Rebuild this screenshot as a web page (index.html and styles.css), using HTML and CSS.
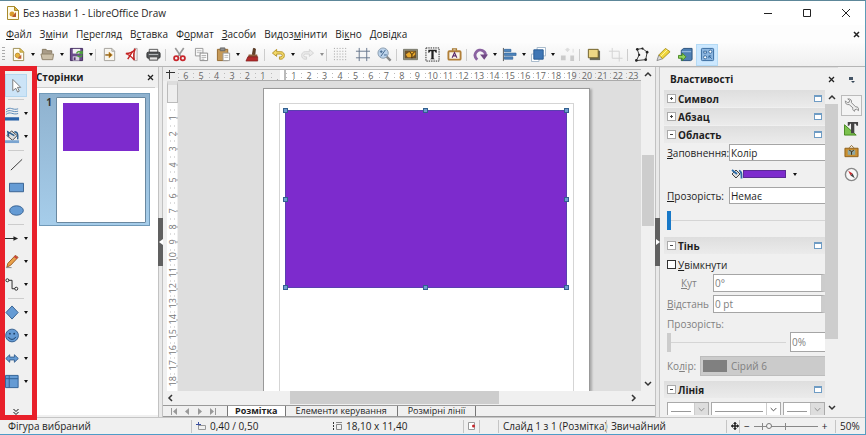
FILE: index.html
```
<!DOCTYPE html>
<html lang="uk">
  <head>
    <meta charset="utf-8">
    <meta name="viewport" content="width=device-width">
    <title>Без назви 1 - LibreOffice Draw</title>
    <link rel="stylesheet" href="styles.css">
  </head>

<body>
    <!-- Title bar -->
    <header class="titlebar">
      <svg class="logo" width="12" height="14" viewBox="0 0 12 14"><path d="M.5.5h7l4 4v9H.5z" fill="#fffbe8" stroke="#a88a2c"/><path d="M7.500.5v4h4z" fill="#e0b840" stroke="#a88a2c"/><circle cx="5" cy="8" r="2.500" fill="#d99a2b"/><path d="M5 11l4-5v5z" fill="#b5562c"/></svg>
      <h1>Без назви 1 - LibreOffice Draw</h1>
      <button class="win" aria-label="Згорнути"><svg width="10" height="10" viewBox="0 0 10 10"><path d="M1 5.500h8" stroke="#222"/></svg></button>
      <button class="win" aria-label="Розгорнути"><svg width="10" height="10" viewBox="0 0 10 10"><path d="M1.500 1.500h7v7h-7z" fill="none" stroke="#222"/></svg></button>
      <button class="win" aria-label="Закрити"><svg width="10" height="10" viewBox="0 0 10 10"><path d="M1 1l8 8M9 1L1 9" stroke="#222"/></svg></button>
    </header>

    <!-- Menu -->
    <nav class="menubar">
      <a href="#"><u>Ф</u>айл</a>
      <a href="#">З<u>м</u>іни</a>
      <a href="#">П<u>е</u>регляд</a>
      <a href="#">В<u>с</u>тавка</a>
      <a href="#">Ф<u>о</u>рмат</a>
      <a href="#"><u>З</u>асоби</a>
      <a href="#">Видоз<u>м</u>інити</a>
      <a href="#">Ві<u>к</u>но</a>
      <a href="#"><u>Д</u>овідка</a>
      <button class="close" aria-label="Закрити документ"><svg width="7" height="7" viewBox="0 0 7 7"><path d="M1 1l5 5M6 1L1 6" stroke="#222" stroke-width="1.500"/></svg></button>
    </nav>

    <!-- Standard toolbar -->
    <div class="toolbar">
      <span class="grip"></span>
      <button class="tool" aria-label="Створити"><svg viewBox="0 0 16 16"><path d="M2.500 1.500h7l4 4v9h-11z" fill="#fffdf2" stroke="#9a8b52"/><path d="M9.500 1.500v4h4z" fill="#e8c95c" stroke="#b89a3a"/><circle cx="7" cy="9" r="2.500" fill="#e8b23a" stroke="#a87a1c" stroke-width=".7"/><path d="M7 12.500l4-4.500v4.500z" fill="#c0603a"/></svg></button>
      <button class="drop" aria-label="Ще"></button>
      <button class="tool" aria-label="Відкрити"><svg viewBox="0 0 16 16"><path d="M2.500 13V2.500h4l1 1.500h5v3" fill="#a99c88" stroke="#83765f"/><path d="M1 7.500h13.500l-1 6h-11z" fill="#cbbfa8" stroke="#8f826b"/></svg></button>
      <button class="drop" aria-label="Ще"></button>
      <button class="tool" aria-label="Зберегти"><svg viewBox="0 0 16 16"><path d="M1.500 1.500h13v13h-13z" fill="#6a4c8c" stroke="#412a5c"/><path d="M4 2h8v5H4z" fill="#f4f1f6"/><path d="M4 10h7v4.500H4z" fill="#d9d2e2"/><path d="M5 11h2v3H5z" fill="#54386f"/><path d="M8 7c1-3 4-3 6 0M14 4v3h-3M14 9c-1 2-4 2-5 0" fill="none" stroke="#4da23c" stroke-width="1.500"/></svg></button>
      <button class="drop" aria-label="Ще"></button>
      <span class="sep"></span>
      <button class="tool" aria-label="Експорт"><svg viewBox="0 0 16 16"><path d="M2.500 1.500h8l3 3v10h-11z" fill="#f7f5ef" stroke="#a3a09a"/><path d="M10.500 1.500v3h3" fill="none" stroke="#a3a09a"/><path d="M3.500 8.500h6" stroke="#8c5a10" stroke-width="1.500"/><path d="M7.500 5.500l3.500 3-3.500 3z" fill="#8c5a10" stroke="#c98a1c" stroke-width=".7"/></svg></button>
      <button class="tool" aria-label="Експорт у PDF"><svg viewBox="0 0 16 16"><path d="M11 1.500h3v13h-3z" fill="#f2eeee" stroke="#b2a6a6"/><path d="M2 7c4 0 8-2 10-5-2 4-2 8-1 12-3-4-6-6-9-7z" fill="#fff" stroke="#c42222" stroke-width="1.500"/><path d="M4 13l5-8" stroke="#c42222" stroke-width="1.500"/></svg></button>
      <button class="tool" aria-label="Друк"><svg viewBox="0 0 16 16"><path d="M3.500 2.500h9v4h-9z" fill="#f2f2f2" stroke="#555"/><rect x="1" y="5.500" width="14" height="6.500" rx="1.500" fill="#55585a" stroke="#2c2e2f"/><path d="M3 8h10" stroke="#b9bcbe"/><path d="M3.500 10.500h9v3.500h-9z" fill="#e4e4e4" stroke="#444"/></svg></button>
      <span class="sep"></span>
      <button class="tool" aria-label="Вирізати"><svg viewBox="0 0 16 16"><path d="M3.500 1l6 9M12.500 1l-6 9" stroke="#999" stroke-width="1.800"/><circle cx="4.500" cy="12" r="2.300" fill="none" stroke="#c8262c" stroke-width="1.900"/><circle cx="11.500" cy="12" r="2.300" fill="none" stroke="#c8262c" stroke-width="1.900"/></svg></button>
      <button class="tool" aria-label="Копіювати"><svg viewBox="0 0 16 16"><path d="M1.500 1.500h8v8h-8z" fill="#fafafa" stroke="#999"/><path d="M3 4h5M3 6h5" stroke="#bbb"/><path d="M6.500 6.500h8v8h-8z" fill="#fff" stroke="#888"/><path d="M8 9h5M8 11h5M8 13h3" stroke="#aaa"/></svg></button>
      <button class="tool" aria-label="Вставити"><svg viewBox="0 0 16 16"><path d="M1.500 2.500h11v12h-11z" fill="#c69a58" stroke="#94682c"/><path d="M4.500 1h5v3h-5z" fill="#8e8e8e" stroke="#666"/><path d="M7.500 6.500h7v8h-7z" fill="#fff" stroke="#999"/><path d="M9 9h4M9 11h4" stroke="#bbb"/></svg></button>
      <button class="drop" aria-label="Ще"></button>
      <button class="tool" aria-label="Копіювати формат"><svg viewBox="0 0 16 16"><path d="M9 1.500l2 .5-.5 6H8z" fill="#6e4a30" stroke="#4a2c18"/><path d="M4 8h9l.5 3H3z" fill="#8d5d3c"/><path d="M3 10.500h10.500V15H1z" fill="#b22c2c" stroke="#7a1a1a" stroke-width=".7"/></svg></button>
      <span class="sep"></span>
      <button class="tool" aria-label="Скасувати"><svg viewBox="0 0 16 16"><path d="M1.500 6.500L6 2.500v2.500h4.500c5 0 5 8 0 8H9v-2.500h1.500c2 0 2-3 0-3H6V10z" fill="#f3d867" stroke="#b4942c"/></svg></button>
      <button class="drop" aria-label="Ще"></button>
      <button class="tool off" aria-label="Повторити"><svg viewBox="0 0 16 16"><path d="M14.500 6.500L10 2.500v2.500H5.500c-5 0-5 8 0 8H7v-2.500H5.500c-2 0-2-3 0-3H10V10z" fill="#ddd" stroke="#aaa"/></svg></button>
      <button class="drop off" aria-label="Ще"></button>
      <span class="sep"></span>
      <button class="tool" aria-label="Сітка"><svg viewBox="0 0 16 16"><path d="M1 1.500h15M1 4.500h15M1 7.500h15M1 10.500h15M1 13.500h15" stroke="#999" stroke-dasharray="1 2"/></svg></button>
      <button class="tool" aria-label="Напрямні"><svg viewBox="0 0 16 16"><path d="M4.500 1v14M12.500 1v14M1 4.500h15M1 11.500h15" stroke="#65758c"/></svg></button>
      <button class="tool" aria-label="Масштаб"><svg viewBox="0 0 16 16"><path d="M10 10l4.500 4.500" stroke="#888" stroke-width="2.500"/><circle cx="6.500" cy="6.500" r="5.500" fill="#bdd4ec" stroke="#8a9cae"/><path d="M3 5h3M4.500 3.500v3M7.500 8.500h3M4 10l5-7" stroke="#41648c" fill="none"/></svg></button>
      <span class="sep"></span>
      <button class="tool" aria-label="Зображення"><svg viewBox="0 0 16 16"><path d="M.5 2.500h15v11H.5z" fill="#8f8f7e" stroke="#77776a"/><path d="M2 4h12v8H2z" fill="#6d5128"/><path d="M3 8l4-3h6v3l-3 3H5z" fill="#e9a92b"/><path d="M9.500 12V8L7 5M9.500 8l3-3" stroke="#2c1c08" fill="none"/></svg></button>
      <button class="tool" aria-label="Текстове поле"><svg viewBox="0 0 16 16"><path d="M1 1h14v14H1z" fill="none" stroke="#222" stroke-dasharray="1.500 1"/><path d="M3.500 3h9v3h-1l-1-1.500H9.200v7.500l1.300 1H5.500l1.300-1V4.500H5.500L4.500 6h-1z" fill="#222"/></svg></button>
      <button class="tool" aria-label="Fontwork"><svg viewBox="0 0 16 16"><path d="M6 4V2h4v2" fill="none" stroke="#a77a33" stroke-width="1.500"/><rect x="1.500" y="4.500" width="13" height="9" rx="1" fill="#fbf5ea" stroke="#b17f38" stroke-width="2"/><path d="M5.500 11.500L8 6l2.500 5.500M6.500 9.500h3" stroke="#5c2c6c" fill="none" stroke-width="1.200"/></svg></button>
      <span class="sep"></span>
      <button class="tool" aria-label="Обертання"><svg viewBox="0 0 16 16"><path d="M4.500 13.500c-6-6 1-12.500 6-9.500 2 1 3 3 2.500 5" fill="none" stroke="#8a62a0" stroke-width="3"/><path d="M7.500 8h8.500l-4 5.500z" fill="#704884"/></svg></button>
      <button class="drop" aria-label="Ще"></button>
      <button class="tool" aria-label="Вирівнювання"><svg viewBox="0 0 16 16"><path d="M1.500 1v14" stroke="#555"/><path d="M2.500 2.500h7v2.500h-7zM2.500 6.500h12.500v2.500H2.500zM2.500 10.500h9v2.500h-9z" fill="#4f86bf" stroke="#2d5e94" stroke-width=".7"/></svg></button>
      <button class="drop" aria-label="Ще"></button>
      <button class="tool" aria-label="Розташування"><svg viewBox="0 0 16 16"><path d="M6.500.5h9v9h-9zM.5 7.500h8v8h-8z" fill="#fff" stroke="#a2b5c8"/><path d="M3 3h10v10H3z" fill="#3f76b5" stroke="#285a92"/></svg></button>
      <button class="drop" aria-label="Ще"></button>
      <button class="tool off" aria-label="Розподіл"><svg viewBox="0 0 16 16"><path d="M1 9h5v5H1zM11 9h4v6h-4z" fill="#999"/><path d="M8 1l2 2-2 2-2-2zM14 2v4" fill="#bbb" stroke="#bbb"/></svg></button>
      <span class="sep"></span>
      <button class="tool" aria-label="Тінь"><svg viewBox="0 0 16 16"><path d="M4 4h11v10H4z" fill="#6a6a5c"/><path d="M2.500 2.500h10.500v9H2.500z" fill="#edd684" stroke="#6b5c24"/></svg></button>
      <button class="tool off" aria-label="Обрізати"><svg viewBox="0 0 16 16"><path d="M4.500 1v11h11M1 4.500h11v11" stroke="#aaa" fill="none"/></svg></button>
      <span class="sep"></span>
      <button class="tool" aria-label="Точки"><svg viewBox="0 0 16 16"><path d="M3.500 2.500L9 1.500l5 4-1.500 8-10 1 3-6z" fill="none" stroke="#333"/><g fill="#222"><circle cx="3.500" cy="2.500" r="1.400"/><circle cx="9" cy="1.700" r="1.200"/><circle cx="14" cy="5.500" r="1.400"/><circle cx="12.500" cy="13.500" r="1.400"/><circle cx="2.500" cy="14.300" r="1.400"/><circle cx="5.500" cy="8.500" r="1.200"/></g></svg></button>
      <button class="tool" aria-label="Точки з'єднання"><svg viewBox="0 0 16 16"><path d="M1 14.500l2-6 4 4z" fill="#ddd" stroke="#888"/><path d="M3 8.500l7-7 5 3.500-8 7.500z" fill="#f0d63e" stroke="#a8901c"/><path d="M5 10l7-7" stroke="#fff7b0"/></svg></button>
      <button class="tool" aria-label="Ефекти"><svg viewBox="0 0 16 16"><path d="M3.500 3.500L6 1.500h9v12l-1.500 1h-10z" fill="#4f80b4" stroke="#274f7b"/><path d="M4 5h10" stroke="#a5c7e8"/><path d="M.5 9h4V6.500L8.500 10.500l-4 4V12h-4z" fill="#8fd45c" stroke="#48861f"/></svg></button>
      <button class="tool active" aria-label="Функції малювання"><svg viewBox="0 0 16 16"><rect x="1.500" y="1.500" width="13" height="13" rx="1" fill="#8cb6e0" stroke="#34689c"/><path d="M4 4.500h3v2H4z" fill="#fff" stroke="#34689c"/><circle cx="11" cy="5" r="1.700" fill="#fff" stroke="#34689c"/><circle cx="5.500" cy="11" r="1.700" fill="#fff" stroke="#34689c"/><path d="M9.500 9.500l3 3M9.500 12V9.500H12" stroke="#34689c" fill="none"/></svg></button>
    </div>

    <main class="main">
      <!-- Drawing tools -->
      <div class="drawbar">
        <button class="dtool pick" aria-label="Виділення"><svg viewBox="0 0 16 16"><path d="M4 1.500l8.500 8.500H9l2 4-1.800 1L7.300 11 4 13.500z" fill="#fff" stroke="#777"/></svg></button>
        <span class="hsep"></span>
        <button class="dtool more" aria-label="Колір лінії"><svg viewBox="0 0 16 16"><path d="M1 4c5-4 7 1 13-1M1 6.500c5-4 7 1 13-1M1 9c5-4 7 1 13-1" stroke="#5585b5" fill="none"/><path d="M0 12h15v3.500H0z" fill="#2a62a8"/></svg></button>
        <button class="dtool more" aria-label="Колір заповнення"><svg viewBox="0 0 16 16"><path d="M2 7l5-5 6 5-5 5z" fill="#ddd" stroke="#444"/><path d="M4 8L3 3l7 4M10 3c4 0 4 4 3.500 8" stroke="#285c8c" stroke-width="1.500" fill="none"/><path d="M0 12h15v3H0z" fill="#7aa4d0"/></svg></button>
        <span class="hsep"></span>
        <button class="dtool" aria-label="Лінія"><svg viewBox="0 0 16 16"><path d="M2 14L14 2.500" stroke="#333"/></svg></button>
        <button class="dtool" aria-label="Прямокутник"><svg viewBox="0 0 16 16"><path d="M.5 3.500h15v9H.5z" fill="#659bd4" stroke="#345f8f"/></svg></button>
        <button class="dtool" aria-label="Еліпс"><svg viewBox="0 0 16 16"><ellipse cx="8" cy="8" rx="7.300" ry="5" fill="#659bd4" stroke="#345f8f"/></svg></button>
        <span class="hsep"></span>
        <button class="dtool more" aria-label="Стрілки"><svg viewBox="0 0 16 16"><path d="M0 8h11" stroke="#222"/><path d="M9 5.500L14 8l-5 2.500z" fill="#222"/></svg></button>
        <button class="dtool more" aria-label="Криві"><svg viewBox="0 0 16 16"><path d="M2 14l1-4 8-8.500 3 2L6 12z" fill="#e9a24a" stroke="#9c5a22"/><path d="M10 2.500l3 2" stroke="#c84040" stroke-width="2"/><path d="M1 14.500h6" stroke="#888"/></svg></button>
        <button class="dtool more" aria-label="З'єднувачі"><svg viewBox="0 0 16 16"><path d="M2 3.500h5.500v9H12" stroke="#222" fill="none"/><circle cx="2.500" cy="3.500" r="1.600" fill="#fff" stroke="#222"/><circle cx="12" cy="12.500" r="1.600" fill="#fff" stroke="#222"/></svg></button>
        <span class="hsep"></span>
        <button class="dtool more" aria-label="Основні фігури"><svg viewBox="0 0 16 16"><path d="M7.500 1l6.500 7-6.500 7L1 8z" fill="#659bd4" stroke="#345f8f"/></svg></button>
        <button class="dtool more" aria-label="Символи"><svg viewBox="0 0 16 16"><circle cx="7.500" cy="8" r="6.800" fill="#659bd4" stroke="#345f8f"/><circle cx="5.200" cy="6" r="1" fill="#1d3f66"/><circle cx="9.800" cy="6" r="1" fill="#1d3f66"/><path d="M3.500 9.500c2 3.500 6 3.500 8 0" stroke="#1d3f66" fill="none"/></svg></button>
        <button class="dtool more" aria-label="Блокові стрілки"><svg viewBox="0 0 16 16"><path d="M.8 8L5 4v2.500h5V4l4.200 4L10 12V9.500H5V12z" fill="#659bd4" stroke="#345f8f"/></svg></button>
        <button class="dtool more" aria-label="Блок-схеми"><svg viewBox="0 0 16 16"><path d="M.5 1.500h13.500v13H.5zM4.500 1.500v13M.5 5h13.500" fill="#659bd4" stroke="#2e5f94"/></svg></button>
        <button class="overflow" aria-label="Ще інструменти"><svg width="6" height="6" viewBox="0 0 6 6"><path d="M.5 0L3 2.500 5.500 0M.5 3L3 5.500 5.500 3" stroke="#111" fill="none"/></svg></button>
        <span class="highlight"></span>
      </div>

      <!-- Pages -->
      <aside class="pages">
        <div class="pages-head">
          <h2>Сторінки</h2>
          <button class="close" aria-label="Закрити панель"><svg width="7" height="7" viewBox="0 0 7 7"><path d="M1 1l5 5M6 1L1 6" stroke="#222" stroke-width="1.300"/></svg></button>
        </div>
        <div class="pages-list">
          <div class="thumb">
            <span class="num">1</span>
            <div class="sheet"><div class="mini"></div></div>
          </div>
        </div>
      </aside>

      <div class="splitter"><button class="handle" aria-label="Сховати панель сторінок"><svg width="4" height="6" viewBox="0 0 4 6"><path d="M4 0v6L0 3z" fill="#fff"/></svg></button></div>

      <!-- Drawing area -->
      <section class="work">
        <div class="corner"><svg width="9" height="9" viewBox="0 0 9 9"><path d="M0 2.500h9M3.500 0v9" stroke="#333"/></svg></div>
        <div class="hruler">
          <span>6</span><span>5</span><span>4</span><span>3</span><span>2</span><span>1</span><span></span>
          <span>1</span><span>2</span><span>3</span><span>4</span><span>5</span><span>6</span><span>7</span><span>8</span><span>9</span><span>10</span><span>11</span><span>12</span><span>13</span><span>14</span><span>15</span><span>16</span><span>17</span><span>18</span><span>19</span><span>20</span><span>21</span><span>22</span><span>23</span>
        </div>
        <div class="vruler">
          <div class="vout"></div>
          <span>1</span><span>2</span><span>3</span><span>4</span><span>5</span><span>6</span><span>7</span><span>8</span><span>9</span><span>10</span><span>11</span><span>12</span><span>13</span><span>14</span><span>15</span><span>16</span><span>17</span><span>18</span>
        </div>
        <div class="canvas">
          <div class="page">
            <div class="margins">
              <div class="shape">
                <i class="h nw"></i><i class="h n"></i><i class="h ne"></i>
                <i class="h w"></i><i class="h e"></i>
                <i class="h sw"></i><i class="h s"></i><i class="h se"></i>
              </div>
            </div>
          </div>
        </div>
        <div class="vscroll">
          <button aria-label="Вгору"><svg width="8" height="6" viewBox="0 0 8 6"><path d="M1 5l3-3 3 3" stroke="#333" stroke-width="1.500" fill="none"/></svg></button>
          <div class="vtrack"><div class="vthumb"></div></div>
          <button aria-label="Вниз"><svg width="8" height="6" viewBox="0 0 8 6"><path d="M1 1l3 3 3-3" stroke="#333" stroke-width="1.500" fill="none"/></svg></button>
        </div>
        <div class="hscroll">
          <button aria-label="Ліворуч"><svg width="6" height="8" viewBox="0 0 6 8"><path d="M5 1L2 4l3 3" stroke="#333" stroke-width="1.500" fill="none"/></svg></button>
          <div class="htrack"><div class="hthumb"></div></div>
          <button aria-label="Праворуч"><svg width="6" height="8" viewBox="0 0 6 8"><path d="M1 1l3 3-3 3" stroke="#333" stroke-width="1.500" fill="none"/></svg></button>
        </div>
        <div class="tabs">
          <div class="tabnav">
            <button aria-label="Перша"><svg width="6" height="7" viewBox="0 0 6 7"><path d="M6 0v7L2 3.500zM0 0h1v7H0z" fill="#999"/></svg></button>
            <button aria-label="Попередня"><svg width="6" height="7" viewBox="0 0 6 7"><path d="M5 0v7L1 3.500z" fill="#999"/></svg></button>
            <button aria-label="Наступна"><svg width="6" height="7" viewBox="0 0 6 7"><path d="M1 0v7l4-3.500z" fill="#999"/></svg></button>
            <button aria-label="Остання"><svg width="6" height="7" viewBox="0 0 6 7"><path d="M0 0v7l4-3.500zM5 0h1v7H5z" fill="#999"/></svg></button>
          </div>
          <button class="tab current">Розмітка</button>
          <button class="tab">Елементи керування</button>
          <button class="tab">Розмірні лінії</button>
        </div>
      </section>

      <div class="splitter"><button class="handle" aria-label="Сховати бічну панель"><svg width="4" height="6" viewBox="0 0 4 6"><path d="M0 0v6l4-3z" fill="#fff"/></svg></button></div>

      <!-- Properties -->
      <aside class="props">
        <div class="props-head">
          <h2>Властивості</h2>
          <button class="close" aria-label="Закрити бічну панель"><svg width="7" height="7" viewBox="0 0 7 7"><path d="M1 1l5 5M6 1L1 6" stroke="#222" stroke-width="1.300"/></svg></button>
        </div>
        <div class="props-wrap">
          <form class="props-body">
            <h3 class="plus">Символ<i class="dlg"></i></h3>
            <h3 class="plus">Абзац<i class="dlg"></i></h3>
            <h3>Область<i class="dlg"></i></h3>
            <div class="row first">
              <label for="fill"><u>З</u>аповнення:</label>
              <select id="fill"><option>Колір</option></select>
            </div>
            <div class="row color">
              <svg width="12" height="12" viewBox="0 0 12 12"><path d="M1 6l4-4 4 4-4 4z" fill="#ddd" stroke="#444"/><path d="M1 2l5 4M8 2.500c3 1 2.500 4 2.500 8" stroke="#2b6aa6" stroke-width="1.800" fill="none"/></svg>
              <button type="button" class="swatch" aria-label="Колір заповнення"></button>
              <button type="button" class="drop" aria-label="Вибрати колір"></button>
            </div>
            <div class="row">
              <label for="transp"><u>П</u>розорість:</label>
              <select id="transp"><option>Немає</option></select>
            </div>
            <div class="row slide">
              <input type="range" class="slider" value="0" aria-label="Прозорість">
            </div>
            <h3>Тінь<i class="dlg"></i></h3>
            <div class="row check">
              <input type="checkbox" id="shadow">
              <label for="shadow"><u>У</u>вімкнути</label>
            </div>
            <div class="row spin">
              <label for="angle" class="mid"><u>К</u>ут</label>
              <input type="text" id="angle" value="0°" disabled>
            </div>
            <div class="row spin">
              <label for="dist"><u>В</u>ідстань</label>
              <input type="text" id="dist" value="0 pt" disabled>
            </div>
            <div class="row caption"><label for="strans">Прозорість:</label></div>
            <div class="row pct">
              <input type="range" id="strans" class="slider" value="0" disabled>
              <input type="text" value="0%" disabled aria-label="Відсоток прозорості">
            </div>
            <div class="row shade">
              <label for="scolor">Ко<u>л</u>ір:</label>
              <div class="shade-box">
                <i class="chip"></i>
                <select id="scolor" disabled><option>Сірий 6</option></select>
              </div>
            </div>
            <h3>Лінія<i class="dlg"></i></h3>
            <div class="row lines">
              <button type="button" class="combo dim" aria-label="Початок лінії"><span></span><svg width="14" height="12" viewBox="0 0 14 12"><path d="M4 5l3 3 3-3" stroke="#888" fill="none"/></svg></button>
              <button type="button" class="combo wide" aria-label="Стиль лінії"><span></span><svg width="14" height="12" viewBox="0 0 14 12"><path d="M4 5l3 3 3-3" stroke="#444" fill="none"/></svg></button>
              <button type="button" class="combo dim" aria-label="Кінець лінії"><span></span><svg width="14" height="12" viewBox="0 0 14 12"><path d="M4 5l3 3 3-3" stroke="#888" fill="none"/></svg></button>
            </div>
          </form>
          <div class="vscroll side">
            <button aria-label="Вгору"><svg width="8" height="6" viewBox="0 0 8 6"><path d="M1 5l3-3 3 3" stroke="#333" stroke-width="1.500" fill="none"/></svg></button>
            <div class="vtrack"><div class="vthumb"></div></div>
            <button aria-label="Вниз"><svg width="8" height="6" viewBox="0 0 8 6"><path d="M1 1l3 3 3-3" stroke="#333" stroke-width="1.500" fill="none"/></svg></button>
          </div>
        </div>
      </aside>

      <div class="deck">
        <button class="deck-menu" aria-label="Налаштування панелі"><svg width="6" height="6" viewBox="0 0 6 6"><path d="M0 0h4v3H0z" fill="#456"/><path d="M2 4h4L4 6z" fill="#345"/></svg></button>
        <button class="on" aria-label="Властивості"><svg viewBox="0 0 16 16"><path d="M1.500 3l2 2 2-.5.500-2-2-1.500c3-.5 4.500 1.500 4 4l4.500 4.500c2-.5 3.500 1 3 4l-2-1.500-2 .5-.3 1.700c-2-1-2.200-2.700-1.700-3.700L5.500 7C3 7.500 1 6 1.500 3z" fill="#eee" stroke="#888"/></svg></button>
        <button aria-label="Стилі"><svg viewBox="0 0 16 16"><path d="M.5 4v11H13z" fill="#7cc24e" stroke="#43861d"/><path d="M4 1h11v4h-1.500l-1-2H11v10H7.500V3H6.500l-1 2H4z" fill="#444"/></svg></button>
        <button aria-label="Галерея"><svg viewBox="0 0 16 16"><path d="M5.500 4l2.500-2.500L10.500 4" fill="none" stroke="#8c6a2c"/><path d="M1 4.500h14v9H1z" fill="#c98f30" stroke="#8e5f1a"/><path d="M4 6.500h8v5H4z" fill="#8fa8a4"/><path d="M8 11.500V8L5.500 6.500M8 8.500l2.500-2" stroke="#402c10" fill="none"/></svg></button>
        <button aria-label="Навігатор"><svg viewBox="0 0 16 16"><circle cx="8" cy="8" r="6.500" fill="#f8f8f8" stroke="#888" stroke-width="1.500"/><path d="M4.500 4l4.700 3L7 9z" fill="#c8282c"/><path d="M11.500 12L7 9l2.200-2z" fill="#444"/></svg></button>
      </div>
    </main>

    <!-- Status bar -->
    <footer class="status">
      <span>Фігура вибраний</span>
      <span class="line"><svg width="10" height="9" viewBox="0 0 10 9"><path d="M0 2.500h5M2.500 0v5" stroke="#3a4fa0"/><path d="M2.500 3.500h7v4h-7z" fill="none" stroke="#999"/></svg>0,40 / 0,50</span>
      <span><svg width="10" height="9" viewBox="0 0 10 9"><path d="M1.500 0v8" stroke="#333" stroke-dasharray="2 1"/><path d="M4.500 2.500h5v5h-5zM4 .5h6" fill="none" stroke="#888"/></svg>18,10 x 11,40</span>
      <span class="line"><svg width="8" height="8" viewBox="0 0 8 8"><path d="M.5.500h6v7h-6z" fill="#fff" stroke="#999"/><circle cx="5.500" cy="4" r="1.500" fill="#c8282c"/></svg></span>
      <span class="line"></span>
      <span class="line">Слайд 1 з 1 (Розмітка)</span>
      <span class="line">Звичайний</span>
      <span class="line"><svg width="8" height="8" viewBox="0 0 8 8"><path d="M4 0v8M0 4h8" stroke="#222" stroke-width="1.500"/><path d="M2.500 1.500h3M2.500 6.500h3M1.500 2.500v3M6.500 2.500v3" stroke="#222"/></svg></span>
      <span class="line zoom">
        <button aria-label="Зменшити">−</button>
        <input type="range" min="0" max="100" value="22" aria-label="Масштаб">
        <button aria-label="Збільшити">+</button>
      </span>
      <span class="line">50%</span>
    </footer>
</body>

</html>
```
FILE: styles.css
```
* {
  box-sizing: border-box;
}

body {
  margin: 0;
  height: 100vh;
  display: flex;
  flex-direction: column;
  overflow: hidden;
  font: 10px/14px "Open Sans", "Noto Sans", sans-serif;
  color: #1e1e1e;
  background: #f0f0f0;
  border-top: 1px solid #5d8799;
  border-right: 1px solid #5d9cb8;
  border-bottom: 1px solid #4f9cc8;
}

button {
  display: flex;
  align-items: center;
  justify-content: center;
  flex: none;
  margin: 0;
  padding: 0;
  border: 0;
  background: none;
  font: inherit;
  color: inherit;
}

h1, h2, h3 {
  margin: 0;
  font-size: 10px;
}

/* Title and menu */
.titlebar {
  display: flex;
  align-items: center;
  height: 24px;
  padding: 0 0 0 7px;
  background: #fff;
}

.titlebar h1 {
  flex: 1;
  margin-left: 4px;
  font-weight: normal;
}

.win {
  width: 39px;
  height: 24px;
}

.menubar {
  display: flex;
  align-items: center;
  gap: 8px;
  height: 18px;
  padding: 0 5px 0 6px;
  background: #fdfdfd;
}

.menubar a {
  color: #1e1e1e;
  text-decoration: none;
}

.menubar .close {
  margin-left: auto;
}

/* Toolbar */
.toolbar {
  display: flex;
  align-items: center;
  height: 23px;
  background: linear-gradient(#fcfcfc, #efefef);
}

.grip {
  width: 3px;
  height: 15px;
  margin: 0 2px;
  background: repeating-linear-gradient(#aaa 0 1px, transparent 1px 3px);
}

.tool {
  width: 22px;
  height: 22px;
}

.tool svg,
.dtool svg,
.deck svg {
  width: 15px;
  height: 15px;
}

.tool.active {
  background: #cce8ff;
  border: 1px solid #b4daf5;
}

.off {
  opacity: 0.45;
}

.drop {
  width: 7px;
  height: 22px;
}

.drop::before,
.more::after {
  content: "";
  border: 2px solid transparent;
  border-top: 3px solid #111;
  border-bottom: 0;
}

.sep {
  width: 1px;
  height: 12px;
  margin: 0 2px 0 1px;
  background: #ccc;
}

/* Main area */
.main {
  flex: 1;
  display: flex;
  min-height: 0;
  border-top: 1px solid #b5b5b5;
}

.drawbar {
  position: relative;
  width: 36px;
  padding: 7px 0 0 5px;
  display: flex;
  flex-direction: column;
  background: #f0f0f0;
}

.dtool {
  width: 22px;
  height: 23px;
}

.more {
  width: 25px;
  justify-content: flex-start;
  gap: 4px;
}

.pick {
  background: #cce4f7;
  border: 1px solid #b4d6ee;
}

.hsep {
  width: 16px;
  height: 1px;
  margin: 2px 0 2px 3px;
  background: #ccc;
}

.overflow {
  width: 22px;
  margin-top: auto;
  margin-bottom: 2px;
}

/* Red frame round the drawing tools */
.highlight {
  position: absolute;
  inset: -1px -1px -3px 0;
  z-index: 2;
  border: 5px solid #e8202a;
  pointer-events: none;
}

.pages {
  width: 122px;
  display: flex;
  flex-direction: column;
  margin-bottom: 2px;
}

.pages-head {
  display: flex;
  align-items: center;
  justify-content: space-between;
  height: 21px;
  margin-right: 3px;
  padding-right: 1px;
  border-bottom: 1px solid #ccc;
}

.pages-list {
  flex: 1;
  padding: 5px 8px 0 3px;
  background: #fff;
}

.thumb {
  display: flex;
  height: 133px;
  padding: 3px 3px 2px 0;
  border: 1px solid #7099b8;
  background: linear-gradient(#8fb2cf, #a6cdea);
}

.num {
  width: 16px;
  padding-right: 4px;
  font-weight: bold;
  line-height: 10px;
  text-align: right;
  color: #333;
}

.sheet {
  flex: 1;
  padding: 5px 6px;
  background: #fff;
  border: 1px solid #6a88a0;
  border-radius: 1px;
}

.mini {
  height: 48px;
  background: #7d2bcd;
}

.splitter {
  display: flex;
  align-items: center;
  width: 5px;
  background: #e9e9e9;
  border-left: 1px solid #c2c2c2;
  border-right: 1px solid #c2c2c2;
}

.handle {
  width: 5px;
  height: 48px;
  margin: 0 -1px;
  background: #606060;
}

/* Rulers and canvas */
.work {
  flex: 1;
  min-width: 0;
  display: grid;
  grid-template-columns: 15px 1fr 14px;
  grid-template-rows: 14px 1fr 14px 12px;
  background: #f0f0f0;
}

.corner {
  display: flex;
  align-items: center;
  justify-content: center;
  background: #ececec;
}

.hruler {
  display: grid;
  grid-template-columns: repeat(30, 1fr);
  margin-top: 2px;
  overflow: hidden;
  font-size: 9px;
  line-height: 11px;
  text-align: center;
  color: #666;
  background: linear-gradient(to right, #eee 22%, #fff 22% 85%, #eee 85%);
  border-top: 1px solid #bbb;
  border-bottom: 1px solid #aaa;
}

.hruler span,
.vruler span {
  background:
    linear-gradient(#aaa, #aaa) 50% 100% / 1px 2px no-repeat,
    repeating-linear-gradient(transparent 0 3px, #bbb 3px 4px) 0 0 / 1px 9px no-repeat;
}

.hruler span:nth-child(7) {
  border-right: 2px solid #bbb;
}

.vruler {
  display: grid;
  grid-template-rows: 29px repeat(18, 1fr) 2px;
  margin: 0 1px 0 4px;
  font-size: 9px;
  line-height: 11px;
  text-align: center;
  color: #777;
  background: #fff;
}

.vruler span {
  writing-mode: vertical-rl;
  transform: rotate(180deg);
  background:
    linear-gradient(#aaa, #aaa) 0 50% / 2px 1px no-repeat,
    repeating-linear-gradient(to right, transparent 0 3px, #bbb 3px 4px) 0 100% / 9px 1px no-repeat;
}

.vout {
  height: 22px;
  border: 1px solid #bbb;
  border-top: 4px solid #ddd;
  background: #eee;
}

.canvas {
  display: flex;
  overflow: hidden;
  padding: 7px 51px 0 85px;
  background: #dedede;
}

.page {
  flex: 1;
  padding: 14px 15px 0;
  background: #fff;
  border: 1px solid #999;
  border-bottom: 0;
  box-shadow: 2px 1px 2px #aaa;
}

.margins {
  height: 100%;
  padding: 6px 6px 0 5px;
  border: 1px solid #d5d5d5;
  border-bottom: 0;
}

.shape {
  position: relative;
  height: 178px;
  background: #7d2bcd;
  border: 1px solid #5a3fb0;
}

/* Selection handles */
.h {
  position: absolute;
  width: 5px;
  height: 5px;
  background: #6d9bd0;
  border: 1px solid #33608f;
}

.nw, .n, .ne { top: -3px; }
.sw, .s, .se { bottom: -3px; }
.nw, .w, .sw { left: -3px; }
.ne, .e, .se { right: -3px; }
.n, .s { left: calc(50% - 3px); }
.w, .e { top: calc(50% - 2px); }

.vscroll {
  display: flex;
  flex-direction: column;
  grid-column: 3;
  grid-row: 1 / 3;
  background: #f0f0f0;
}

.vscroll button {
  height: 14px;
}

.vtrack {
  flex: 1;
}

.vscroll .vthumb {
  height: 24%;
  margin: 74px 1px 0;
  background: #cdcdcd;
}

.vruler {
  grid-row: 2;
  grid-column: 1;
}

.canvas {
  grid-row: 2;
  grid-column: 2;
}

.hscroll,
.tabs {
  grid-column: 1 / 4;
  display: flex;
}

.hscroll button {
  width: 14px;
}

.hscroll button:last-child {
  margin-right: 14px;
}

.htrack {
  flex: 1;
  padding: 0 26% 0 23%;
}

.hthumb {
  height: 13px;
  background: #cdcdcd;
}

.tabs {
  border-top: 1px solid #999;
  border-bottom: 1px solid #999;
}

.tabnav {
  display: flex;
  gap: 7px;
  padding: 0 11px 0 8px;
}

.tab {
  padding: 0 10px;
  font-size: 9px;
  line-height: 10px;
  border-right: 1px solid #777;
}

.tab.current {
  padding: 0 7px;
  font-weight: bold;
  background: #fff;
  border-left: 1px solid #777;
}

/* Properties sidebar */
.props {
  width: 178px;
  display: flex;
  flex-direction: column;
  padding-left: 4px;
  border-top: 1px solid #ddd;
}

.props-head {
  display: flex;
  align-items: center;
  justify-content: space-between;
  height: 22px;
  padding: 0 3px 0 6px;
}

.props-wrap {
  flex: 1;
  display: flex;
  min-height: 0;
  margin-bottom: 2px;
}

.props-body {
  flex: 1;
  min-width: 0;
  overflow: hidden;
}

.props-body h3 {
  display: flex;
  align-items: center;
  height: 17px;
  margin-bottom: 1px;
  padding: 0 3px 0 3px;
  background: linear-gradient(#dedede, #ebebeb);
}

.props-body h3::before {
  content: "";
  width: 7px;
  height: 7px;
  margin-right: 2px;
  border: 1px solid #aaa;
  background: linear-gradient(#444, #444) 50% 50% / 3px 1px no-repeat #fff;
}

.props-body h3.plus::before {
  background:
    linear-gradient(#444, #444) 50% 50% / 3px 1px no-repeat,
    linear-gradient(#444, #444) 50% 50% / 1px 3px no-repeat #fff;
}

.dlg {
  width: 8px;
  height: 7px;
  margin-left: auto;
  background: #fff;
  border: 1px solid #6f9cc4;
  border-top-width: 2px;
}

.row {
  display: flex;
  align-items: center;
  height: 17px;
  padding-left: 3px;
}

.row label {
  width: 62px;
  flex: none;
  white-space: nowrap;
}

.first {
  margin-top: 1px;
}

.row select,
.row input[type="text"] {
  flex: 1;
  min-width: 0;
  height: 100%;
  margin: 0;
  padding: 0 1px;
  appearance: none;
  font: inherit;
  color: inherit;
  background: #fff;
  border: 1px solid #a5a5a5;
  border-right: 0;
  border-radius: 0;
}

.color {
  height: 26px;
  padding-left: 67px;
}

.swatch {
  width: 43px;
  height: 8px;
  background: #7d2bcd;
  border: 1px solid #5a2a94;
}

.color .drop {
  width: 18px;
}

.slide {
  height: 33px;
}

.slider {
  flex: 1;
  min-width: 0;
  height: 19px;
  margin: 0;
  appearance: none;
  background: linear-gradient(#d5d5d5, #d5d5d5) 0 50% / 100% 1px no-repeat;
}

.slider::-webkit-slider-thumb {
  appearance: none;
  width: 4px;
  height: 19px;
  background: #1979c8;
}

.slider:disabled::-webkit-slider-thumb {
  background: #ccc;
}

.check {
  height: 19px;
}

.check input {
  width: 9px;
  height: 9px;
  margin: 0 2px 0 0;
  appearance: none;
  background: #fff;
  border: 1px solid #333;
}

.spin,
.caption,
.pct,
.shade {
  color: #808080;
}

.spin {
  height: 18px;
  margin-bottom: 3px;
}

.row.spin label {
  width: 46px;
}

.row.spin .mid {
  padding-left: 14px;
}

.row.spin input {
  border-right: 4px solid #ccc;
}

.caption {
  height: 16px;
}

.pct {
  height: 20px;
  gap: 4px;
}

.row.pct input[type="text"] {
  flex: none;
  width: 35px;
}

.shade {
  height: 20px;
  margin: 4px 0 5px;
}

.row.shade label {
  width: 33px;
}

.shade-box {
  flex: 1;
  display: flex;
  align-items: center;
  height: 20px;
  padding-left: 2px;
  background: #cbcbcb;
  border: 1px solid #bdbdbd;
  border-right: 0;
}

.chip {
  width: 24px;
  height: 12px;
  margin-right: 3px;
  background: #808080;
}

.row.shade select {
  background: none;
  border: 0;
  opacity: 1;
}

.lines {
  gap: 2px;
  height: 18px;
  margin-top: 4px;
}

.combo {
  width: 42px;
  height: 18px;
  border: 1px solid #aaa;
  align-items: stretch;
  background: #fff;
}

.combo span {
  flex: 1;
  margin: 0 3px;
  background: linear-gradient(#999, #999) 0 8px / 100% 1px no-repeat;
}

.combo svg {
  border-left: 1px solid #ccc;
}

.combo.dim svg {
  background: #ddd;
}

.combo.wide {
  flex: 1;
}

.vscroll.side {
  width: 13px;
}

.side .vthumb {
  height: 79%;
  margin: 0;
}

.deck {
  width: 27px;
  display: flex;
  flex-direction: column;
  align-items: center;
  gap: 2px;
  padding-top: 9px;
}

.deck button {
  width: 21px;
  height: 21px;
}

.deck .deck-menu {
  height: 8px;
  margin-bottom: 9px;
}

.deck .deck-menu svg {
  width: 6px;
  height: 6px;
}

.deck .on {
  border: 1px solid #bbb;
  background: #f4f4f4;
}

/* Status bar */
.status {
  display: grid;
  grid-template-columns: 183px 141px 131px 16px 19px 108px 1fr 13px 96px 30px;
  align-items: center;
  height: 17px;
  padding-left: 8px;
  border-top: 1px solid #c5c5c5;
  white-space: nowrap;
}

.status span {
  display: flex;
  align-items: center;
  gap: 4px;
  height: 13px;
}

.status .line {
  padding-left: 4px;
  border-left: 1px solid #c5c5c5;
}

.status .zoom {
  gap: 4px;
}

.zoom input {
  width: 64px;
  height: 9px;
  margin: 0;
  appearance: none;
  background:
    linear-gradient(#888, #888) 0 50% / 100% 1px no-repeat,
    linear-gradient(#888, #888) 8px 50% / 1px 7px no-repeat,
    linear-gradient(#888, #888) 50% 50% / 1px 7px no-repeat;
}

.zoom input::-webkit-slider-thumb {
  appearance: none;
  width: 6px;
  height: 6px;
  background: #f4f4f4;
  border: 1px solid #777;
  border-radius: 50%;
}
```
